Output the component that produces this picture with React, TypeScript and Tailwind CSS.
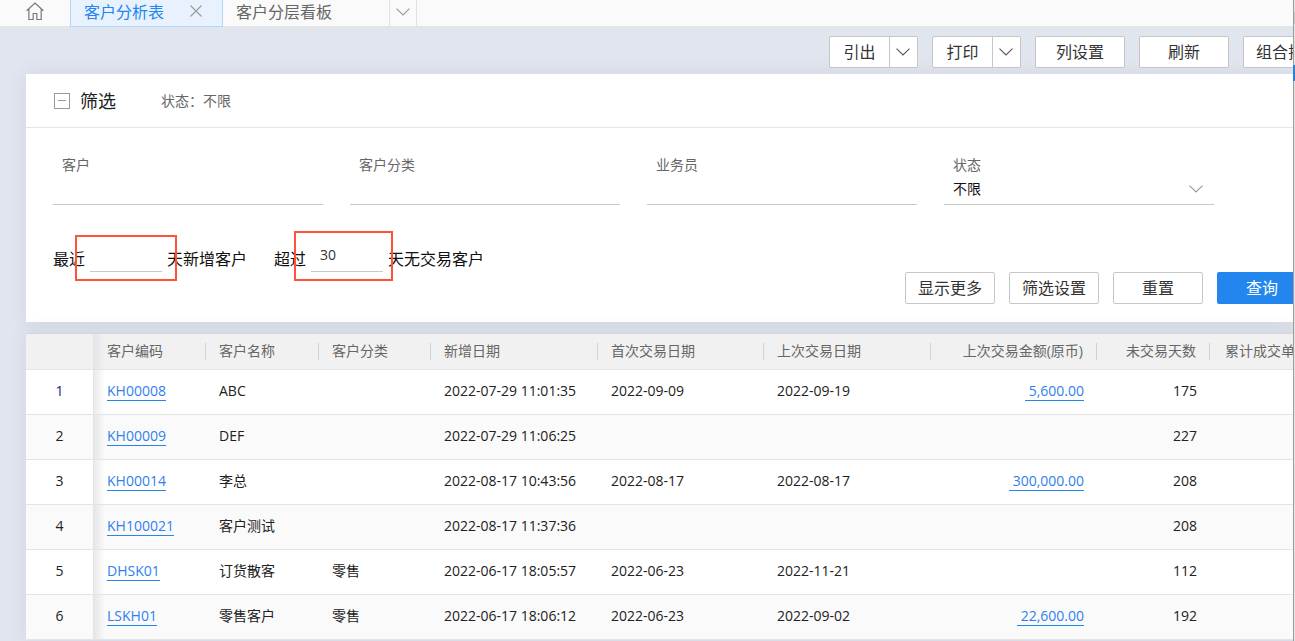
import type { ReactNode } from "react";

function Chevron({ className = "" }: { className?: string }) {
  return (
    <svg className={className} width="14" height="8" viewBox="0 0 14 8" fill="none" stroke="currentColor" strokeWidth="1.1" aria-hidden="true">
      <path d="M0.5 0.7 L7 7 L13.5 0.7" />
    </svg>
  );
}

function Button({ children }: { children: ReactNode }) {
  return (
    <button className="h-8 min-w-[90px] shrink-0 rounded-xs border border-[#c6c6c6] bg-white px-3 text-base leading-6 text-[#333]">
      {children}
    </button>
  );
}

function SplitButton({ label }: { label: string }) {
  return (
    <div className="flex h-8 shrink-0 rounded-xs border border-[#c6c6c6] bg-white text-[#333]">
      <button className="w-[59px] text-base leading-6">{label}</button>
      <button aria-label={label + "选项"} className="flex w-7 items-center justify-center border-l border-[#c6c6c6]">
        <Chevron className="text-[#555]" />
      </button>
    </div>
  );
}

function Field({ id, label }: { id: string; label: string }) {
  return (
    <div className="w-[270px] shrink-0 border-b border-[#c9c9c9] px-[9px] pt-[27px] pb-px">
      <label htmlFor={id} className="block text-sm leading-5 text-[#666]">{label}</label>
      <input id={id} className="block h-7 w-full text-sm outline-none" />
    </div>
  );
}

type Row = {
  code: string;
  name: string;
  kind: string;
  created: string;
  first: string;
  last: string;
  amount: string;
  days: string;
};

const rows: Row[] = [
  { code: "KH00008", name: "ABC", kind: "", created: "2022-07-29 11:01:35", first: "2022-09-09", last: "2022-09-19", amount: "5,600.00", days: "175" },
  { code: "KH00009", name: "DEF", kind: "", created: "2022-07-29 11:06:25", first: "", last: "", amount: "", days: "227" },
  { code: "KH00014", name: "李总", kind: "", created: "2022-08-17 10:43:56", first: "2022-08-17", last: "2022-08-17", amount: "300,000.00", days: "208" },
  { code: "KH100021", name: "客户测试", kind: "", created: "2022-08-17 11:37:36", first: "", last: "", amount: "", days: "208" },
  { code: "DHSK01", name: "订货散客", kind: "零售", created: "2022-06-17 18:05:57", first: "2022-06-23", last: "2022-11-21", amount: "", days: "112" },
  { code: "LSKH01", name: "零售客户", kind: "零售", created: "2022-06-17 18:06:12", first: "2022-06-23", last: "2022-09-02", amount: "22,600.00", days: "192" },
];

const columns = [
  { title: "客户编码", right: false },
  { title: "客户名称", right: false },
  { title: "客户分类", right: false },
  { title: "新增日期", right: false },
  { title: "首次交易日期", right: false },
  { title: "上次交易日期", right: false },
  { title: "上次交易金额(原币)", right: true },
  { title: "未交易天数", right: true },
  { title: "累计成交单数", right: true },
];

function TabBar() {
  return (
    <nav className="flex h-[27px] border-b border-[#e4e4e4] bg-[#fafafa] text-base leading-6">
      <a href="#home" aria-label="首页" className="flex w-[70px] justify-center pt-[2px] text-[#777]">
        <svg width="18" height="19" viewBox="0 0 18 19" fill="none" stroke="currentColor" strokeWidth="1.2" aria-hidden="true">
          <path d="M0.6 8.8 L9 1 L17.4 8.8 M2.9 7.2 V17.5 H7.2 V11.5 H10.8 V17.5 H15.2 V7.2" />
        </svg>
      </a>
      <div className="-mb-px flex w-[153px] border border-t-0 border-[#b3d7fb] bg-[#e8f2fe] pl-[13px]">
        <a href="#analysis" className="text-[#2386ee]">客户分析表</a>
        <button aria-label="关闭" className="ml-[26px] h-[22px] text-[#999]">
          <svg width="12" height="12" viewBox="0 0 12 12" fill="none" stroke="currentColor" strokeWidth="1.1" aria-hidden="true">
            <path d="M0.5 0.5 L11.5 11.5 M11.5 0.5 L0.5 11.5" />
          </svg>
        </button>
      </div>
      <a href="#board" className="w-[166px] pl-[13px] text-[#666]">客户分层看板</a>
      <button aria-label="更多标签" className="flex h-[26px] w-7 justify-center border-x border-[#e2e2e2] pt-2 text-[#999]">
        <Chevron />
      </button>
    </nav>
  );
}

function FilterPanel() {
  return (
    <section className="bg-white pb-[18px] shadow-[0_0_18px_rgba(60,80,120,0.1)]">
      <header className="flex h-[54px] items-center border-b border-[#e5e5e5] pl-7">
        <button aria-label="收起" className="flex size-4 items-center justify-center border border-[#999]">
          <span className="h-px w-2 bg-[#999]" />
        </button>
        <h2 className="ml-[10px] text-lg leading-6 text-[#212121]">筛选</h2>
        <p className="ml-[45px] text-sm leading-5 text-[#666]">状态：不限</p>
      </header>
      <div className="flex gap-[27px] pl-[27px]">
        <Field id="customer" label="客户" />
        <Field id="category" label="客户分类" />
        <Field id="salesman" label="业务员" />
        <div className="relative w-[270px] shrink-0 border-b border-[#c9c9c9] px-[9px] pt-[27px] pb-px">
          <label htmlFor="state" className="block text-sm leading-5 text-[#666]">状态</label>
          <select id="state" className="block h-7 w-full appearance-none text-sm text-[#111] outline-none">
            <option>不限</option>
          </select>
          <Chevron className="pointer-events-none absolute right-[11px] bottom-[11px] text-[#999]" />
        </div>
      </div>
      <div className="flex items-start pt-[26px] pl-[27px] text-base text-[#111]">
        <div className="relative flex h-[50px] items-center pt-[6px]">
          <label htmlFor="newDays">最近</label>
          <input id="newDays" className="mr-[5px] ml-[5px] h-[26px] w-[72px] border-b border-[#c9c9c9] pl-[9px] outline-none" />
          <span>天新增客户</span>
          <span className="pointer-events-none absolute top-[4px] left-[22px] h-[46px] w-[102px] border-2 border-[#ff5238]" />
        </div>
        <div className="relative ml-[27px] flex h-[50px] items-center pt-[6px]">
          <label htmlFor="idleDays">超过</label>
          <input id="idleDays" defaultValue="30" className="mr-[5px] ml-[5px] h-[26px] w-[72px] border-b border-[#c9c9c9] pb-2 pl-[9px] text-sm text-[#333] outline-none" />
          <span>天无交易客户</span>
          <span className="pointer-events-none absolute top-0 left-5 h-[50px] w-[99px] border-2 border-[#ff5238]" />
        </div>
      </div>
      <div className="-mt-[9px] -mr-[14px] flex justify-end gap-[14px]">
        <Button>显示更多</Button>
        <Button>筛选设置</Button>
        <Button>重置</Button>
        <button className="h-8 w-[90px] shrink-0 rounded-xs bg-[#2386ee] text-base leading-6 text-white">查询</button>
      </div>
    </section>
  );
}

function CustomerTable() {
  return (
    <table className="mt-[11px] w-[1297px] table-fixed border-separate border-spacing-0 border-t border-[#d6d6d6] bg-white text-left text-sm leading-5 text-[#212121] shadow-[0_0_18px_rgba(60,80,120,0.1)]">
      <colgroup>
        <col className="w-[68px]" />
        <col className="w-[112px]" />
        <col className="w-[113px]" />
        <col className="w-[112px]" />
        <col className="w-[167px]" />
        <col className="w-[166px]" />
        <col className="w-[167px]" />
        <col className="w-[166px]" />
        <col className="w-[113px]" />
        <col className="w-[113px]" />
      </colgroup>
      <thead>
        <tr className="h-9 bg-[#f1f1f1] text-[#666]">
          <th aria-label="序号" className="border-r border-b border-[#e4e4e4]" />
          {columns.map((c, i) => (
            <th key={c.title} className={"border-b border-[#e4e4e4] p-0 font-normal whitespace-nowrap " + (i === 0 ? "bg-linear-to-r from-[#e6e6e6] to-[#f1f1f1] to-10%" : "")}>
              <div className={"h-[17px] border-r border-[#d2d2d2] px-[13px] leading-[15px] " + (c.right ? "text-right" : "")}>{c.title}</div>
            </th>
          ))}
        </tr>
      </thead>
      <tbody>
        {rows.map((r, i) => (
          <tr key={r.code} className="h-[45px] odd:bg-white even:bg-[#fafafa] [&>td]:border-b [&>td]:border-[#e4e4e4] [&>td]:px-[13px] [&>td]:pb-[2px] [&>td]:whitespace-nowrap">
            <td className={"border-r text-center " + (i === 0 ? "text-[#1a1a8c]" : "")}>{i + 1}</td>
            <td className="bg-linear-to-r from-black/8 to-transparent to-10%">
              <a href={"#" + r.code} className="inline-block border-b border-[#2386ee] leading-[18px] text-[#2f80ed]">{r.code}</a>
            </td>
            <td>{r.name}</td>
            <td>{r.kind}</td>
            <td>{r.created}</td>
            <td>{r.first}</td>
            <td>{r.last}</td>
            <td className="text-right">
              {r.amount && <a href={"#amount-" + r.code} className="inline-block border-b border-[#2386ee] pl-1 leading-[18px] text-[#2f80ed]">{r.amount}</a>}
            </td>
            <td className="text-right">{r.days}</td>
            <td />
          </tr>
        ))}
      </tbody>
    </table>
  );
}

export default function App() {
  return (
    <div className="flex h-screen overflow-hidden bg-[#e1e5ee] font-['Open_Sans','Noto_Sans_CJK_SC',sans-serif]">
      <main className="min-w-0 flex-1 overflow-hidden">
        <TabBar />
        <div className="-mr-10 flex justify-end gap-[14px] pt-[9px] pb-[6px]">
          <SplitButton label="引出" />
          <SplitButton label="打印" />
          <Button>列设置</Button>
          <Button>刷新</Button>
          <Button>组合排序</Button>
        </div>
        <div className="pl-[26px]">
          <FilterPanel />
          <CustomerTable />
        </div>
      </main>
      <div className="w-[2px] border-l border-[#9d9d9d] bg-[#e4e4e4] pt-3">
        <div className="h-3 bg-[#c4c4c4]" />
        <div className="mt-[41px] -ml-px h-4 w-[2px] bg-[#2f80d8]" />
      </div>
    </div>
  );
}
